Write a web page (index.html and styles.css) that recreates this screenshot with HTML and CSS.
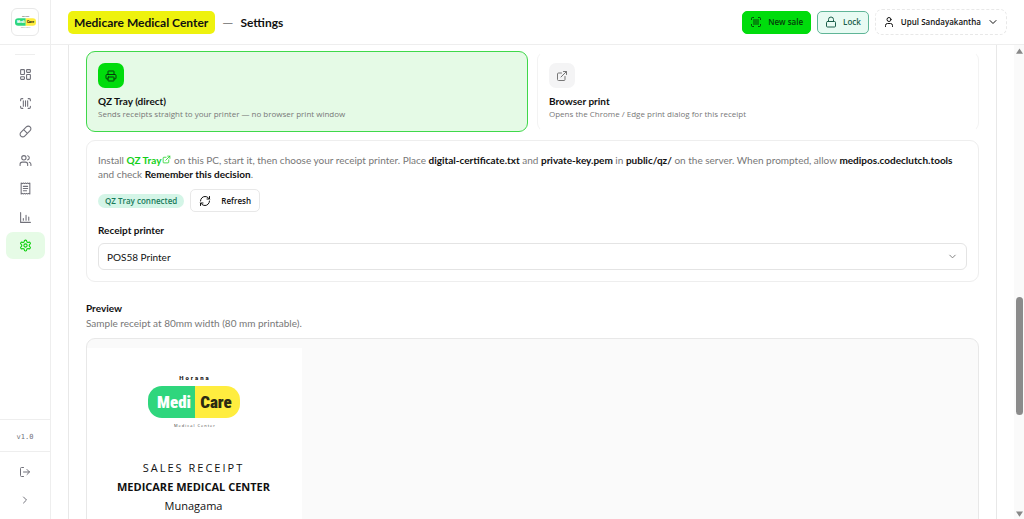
FILE: index.html
```
<!DOCTYPE html>
<html lang="en">
<head>
    <meta charset="UTF-8">
    <meta name="viewport" content="width=device-width, initial-scale=1.0">
    <title>Medicare Medical Center — Settings</title>
    <link rel="stylesheet" href="styles.css">
</head>
<body>
    <svg class="defs" aria-hidden="true">
        <symbol id="scan" viewBox="0 0 24 24"><path d="M3 7V5a2 2 0 0 1 2-2h2M17 3h2a2 2 0 0 1 2 2v2M21 17v2a2 2 0 0 1-2 2h-2M7 21H5a2 2 0 0 1-2-2v-2M8 7v10M12 7v10M16 7v10"/></symbol>
        <symbol id="external" viewBox="0 0 24 24"><path d="M15 3h6v6M10 14 21 3M18 13v6a2 2 0 0 1-2 2H5a2 2 0 0 1-2-2V8a2 2 0 0 1 2-2h6"/></symbol>
        <symbol id="down" viewBox="0 0 24 24"><path d="m6 9 6 6 6-6"/></symbol>
        <symbol id="logo" viewBox="0 0 92 56">
            <text class="logo-top" x="47" y="6" text-anchor="middle">Horana</text>
            <path fill="#2fd67d" d="M47 12H14A14 14 0 0 0 0 26v4a14 14 0 0 0 14 14h33z"/>
            <path fill="#ffed3f" d="M47 12h31a14 14 0 0 1 14 14v4a14 14 0 0 1-14 14H47z"/>
            <text class="logo-word" fill="#fff" x="26" y="34" text-anchor="middle">Medi</text>
            <text class="logo-word" fill="#2b2a12" x="68" y="34" text-anchor="middle">Care</text>
            <text class="logo-sub" x="47" y="53" text-anchor="middle">Medical Center</text>
        </symbol>
    </svg>
    <div class="app">
        <aside class="sidebar">
            <div class="brand">
                <a href="#" class="brand-box" aria-label="Home"><svg><use href="#logo"/></svg></a>
            </div>
            <hr>
            <nav>
                <a href="#" aria-label="Dashboard"><svg class="icon" viewBox="0 0 24 24"><rect x="3" y="3" width="7" height="9" rx="1"/><rect x="14" y="3" width="7" height="5" rx="1"/><rect x="14" y="12" width="7" height="9" rx="1"/><rect x="3" y="16" width="7" height="5" rx="1"/></svg></a>
                <a href="#" aria-label="Sale"><svg class="icon"><use href="#scan"/></svg></a>
                <a href="#" aria-label="Medicines"><svg class="icon" viewBox="0 0 24 24"><path d="m10.500 20.500 10-10a4.950 4.950 0 1 0-7-7l-10 10a4.950 4.950 0 1 0 7 7ZM8.500 8.500l7 7"/></svg></a>
                <a href="#" aria-label="Customers"><svg class="icon" viewBox="0 0 24 24"><path d="M16 21v-2a4 4 0 0 0-4-4H6a4 4 0 0 0-4 4v2M22 21v-2a4 4 0 0 0-3-3.870M16 3.130a4 4 0 0 1 0 7.750"/><circle cx="9" cy="7" r="4"/></svg></a>
                <a href="#" aria-label="Receipts"><svg class="icon" viewBox="0 0 24 24"><path d="M4 2v20l2-1 2 1 2-1 2 1 2-1 2 1 2-1 2 1V2l-2 1-2-1-2 1-2-1-2 1-2-1-2 1ZM8 8h8M8 12h8M8 16h6"/></svg></a>
                <a href="#" aria-label="Reports"><svg class="icon" viewBox="0 0 24 24"><path d="M3 3v18h18M8 17v-3M13 17V8M18 17v-6"/></svg></a>
                <a href="#" class="active" aria-label="Settings"><svg class="icon" viewBox="0 0 24 24"><path d="M12.220 2h-.440a2 2 0 0 0-2 2v.180a2 2 0 0 1-1 1.730l-.430.250a2 2 0 0 1-2 0l-.150-.080a2 2 0 0 0-2.730.730l-.220.380a2 2 0 0 0 .730 2.730l.150.100a2 2 0 0 1 1 1.720v.510a2 2 0 0 1-1 1.740l-.150.090a2 2 0 0 0-.730 2.730l.220.380a2 2 0 0 0 2.730.730l.150-.080a2 2 0 0 1 2 0l.430.250a2 2 0 0 1 1 1.730V20a2 2 0 0 0 2 2h.440a2 2 0 0 0 2-2v-.180a2 2 0 0 1 1-1.730l.430-.250a2 2 0 0 1 2 0l.150.080a2 2 0 0 0 2.730-.730l.220-.390a2 2 0 0 0-.730-2.730l-.150-.080a2 2 0 0 1-1-1.740v-.500a2 2 0 0 1 1-1.740l.150-.090a2 2 0 0 0 .730-2.730l-.220-.380a2 2 0 0 0-2.730-.730l-.150.080a2 2 0 0 1-2 0l-.430-.250a2 2 0 0 1-1-1.730V4a2 2 0 0 0-2-2z"/><circle cx="12" cy="12" r="3"/></svg></a>
            </nav>
            <div class="version">v1.0</div>
            <div class="side-actions">
                <button aria-label="Sign out"><svg class="icon" viewBox="0 0 24 24"><path d="M9 21H5a2 2 0 0 1-2-2V5a2 2 0 0 1 2-2h4M16 17l5-5-5-5M21 12H9"/></svg></button>
                <button aria-label="Expand"><svg class="icon" viewBox="0 0 24 24"><path d="m9 18 6-6-6-6"/></svg></button>
            </div>
        </aside>

        <div class="page">
            <header>
                <h1><mark>Medicare Medical Center</mark> <span class="dash">—</span> Settings</h1>
                <div class="tools">
                    <button class="btn sale"><svg class="icon"><use href="#scan"/></svg>New sale</button>
                    <button class="btn lock"><svg class="icon" viewBox="0 0 24 24"><rect x="3" y="11" width="18" height="11" rx="2"/><path d="M7 11V7a5 5 0 0 1 10 0v4"/></svg>Lock</button>
                    <button class="btn user"><svg class="icon" viewBox="0 0 24 24"><path d="M19 21v-2a4 4 0 0 0-4-4H9a4 4 0 0 0-4 4v2"/><circle cx="12" cy="7" r="4"/></svg>Upul Sandayakantha<svg class="icon"><use href="#down"/></svg></button>
                </div>
            </header>

            <div class="body">
                <main>
                    <section class="settings">
                        <div class="modes">
                            <button class="mode selected">
                                <span class="tile"><svg class="icon" viewBox="0 0 24 24"><path d="M6 18H4a2 2 0 0 1-2-2v-5a2 2 0 0 1 2-2h16a2 2 0 0 1 2 2v5a2 2 0 0 1-2 2h-2M6 9V3a1 1 0 0 1 1-1h10a1 1 0 0 1 1 1v6"/><rect x="6" y="14" width="12" height="8" rx="1"/></svg></span>
                                <strong>QZ Tray (direct)</strong>
                                <small>Sends receipts straight to your printer — no browser print window</small>
                            </button>
                            <button class="mode">
                                <span class="tile"><svg class="icon"><use href="#external"/></svg></span>
                                <strong>Browser print</strong>
                                <small>Opens the Chrome / Edge print dialog for this receipt</small>
                            </button>
                        </div>

                        <div class="panel">
                            <p>Install <a href="#">QZ Tray<svg class="icon"><use href="#external"/></svg></a> on this PC, start it, then choose your receipt printer. Place <b>digital-certificate.txt</b> and <b>private-key.pem</b> in <b>public/qz/</b> on the server. When prompted, allow <b>medipos.codeclutch.tools</b> and check <b>Remember this decision</b>.</p>
                            <div class="status">
                                <span class="badge">QZ Tray connected</span>
                                <button class="btn refresh"><svg class="icon" viewBox="0 0 24 24"><path d="M3 12a9 9 0 0 1 9-9 9.750 9.750 0 0 1 6.740 2.740L21 8M21 3v5h-5M21 12a9 9 0 0 1-9 9 9.750 9.750 0 0 1-6.740-2.740L3 16M8 16H3v5"/></svg>Refresh</button>
                            </div>
                            <label for="printer">Receipt printer</label>
                            <div class="select">
                                <select id="printer"><option>POS58 Printer</option></select>
                                <svg class="icon"><use href="#down"/></svg>
                            </div>
                        </div>

                        <h2>Preview</h2>
                        <p class="hint">Sample receipt at 80mm width (80 mm printable).</p>
                        <div class="preview">
                            <div class="receipt">
                                <svg class="receipt-logo"><use href="#logo"/></svg>
                                <div class="kind">SALES RECEIPT</div>
                                <div class="shop">MEDICARE MEDICAL CENTER</div>
                                <div class="town">Munagama</div>
                            </div>
                        </div>
                    </section>
                </main>
                <div class="scrollbar" aria-hidden="true">
                    <svg viewBox="0 0 8 6"><path d="M4 0 8 6H0z"/></svg>
                    <div class="thumb"></div>
                    <svg viewBox="0 0 8 6"><path d="M4 6 0 0h8z"/></svg>
                </div>
            </div>
        </div>
    </div>
</body>
</html>
```
FILE: styles.css
```
* {
    box-sizing: border-box;
}
body {
    margin: 0;
    font-family: Lato, "Open Sans", sans-serif;
    font-size: 10px;
    line-height: 14px;
    color: #111;
    background: #fff;
}
h1, h2, p {
    margin: 0;
}
button {
    font: inherit;
    color: inherit;
    background: none;
    border: 0;
    padding: 0;
}
a {
    text-decoration: none;
}
.defs {
    display: none;
}
.icon {
    width: 12px;
    height: 12px;
    flex: none;
    fill: none;
    stroke: currentColor;
    stroke-width: 2;
    stroke-linecap: round;
    stroke-linejoin: round;
}
.app {
    display: flex;
    height: 100vh;
    overflow: hidden;
}

/* sidebar */
.sidebar {
    display: flex;
    flex-direction: column;
    flex: none;
    width: 51px;
    border-right: 1px solid #eee;
    color: #71717a;
}
.brand {
    display: flex;
    align-items: center;
    justify-content: center;
    height: 45px;
    border-bottom: 1px solid #eee;
}
.brand-box {
    display: flex;
    align-items: center;
    justify-content: center;
    width: 28px;
    height: 28px;
    border: 1px solid #e8e8e8;
    border-radius: 6px;
}
.brand-box svg {
    width: 21px;
    height: 14px;
}
.sidebar hr {
    width: 20px;
    margin: 9px auto 6px;
    border: 0;
    border-top: 1px solid #eee;
}
nav {
    display: flex;
    flex-direction: column;
    justify-content: space-between;
    height: 198px;
    padding: 0 5px 0 6px;
}
nav a {
    display: flex;
    align-items: center;
    justify-content: center;
    height: 27px;
    border-radius: 7px;
    color: inherit;
}
nav .icon {
    width: 13px;
    height: 13px;
}
nav .active {
    background: #e6fbe6;
    color: #0bd00b;
}
.version {
    margin-top: auto;
    height: 33px;
    border: solid #eee;
    border-width: 1px 0;
    font: 7px/35px "DejaVu Sans Mono", monospace;
    text-align: center;
}
.side-actions {
    display: flex;
    flex-direction: column;
    padding: 6px 0 5px;
}
.side-actions button {
    height: 28px;
}
.side-actions .icon {
    display: block;
    margin: auto;
}

/* header */
.page {
    display: flex;
    flex-direction: column;
    flex: 1;
    min-width: 0;
}
header {
    display: flex;
    align-items: center;
    justify-content: space-between;
    flex: none;
    height: 45px;
    padding: 0 17px;
    border-bottom: 1px solid #eee;
}
h1 {
    display: flex;
    gap: 7px;
    font-size: 12px;
    line-height: 23px;
    font-weight: 700;
}
mark {
    padding: 0 7px 0 6px;
    border-radius: 5px;
    background: #eef20e;
    color: inherit;
}
.dash {
    color: #888;
    font-size: 14px;
    font-weight: 400;
}
.tools {
    display: flex;
    align-items: center;
    gap: 6px;
}
.btn {
    display: flex;
    align-items: center;
    height: 23px;
    padding: 0 7px;
    gap: 6px;
    border: 1px solid #e8e8e8;
    border-radius: 5px;
    font-family: "Open Sans", sans-serif;
    font-size: 8px;
    font-weight: 600;
    white-space: nowrap;
}
.sale {
    border-color: #00dc0c;
    background: #00dc0c;
    color: #053b0a;
}
.lock {
    border-color: #5fb597;
    background: #e8fbf3;
    color: #1b5e4a;
}
.user {
    height: 26px;
    border: 1px dashed #e8e8e8;
    border-radius: 7px;
}

/* settings */
.body {
    display: flex;
    flex: 1;
    min-height: 0;
}
main {
    flex: 1;
    min-width: 0;
    padding: 0 17px;
    overflow: hidden;
}
.settings {
    min-height: 100%;
    padding: 6px 17px 0;
    border: solid #e8e8e8;
    border-width: 0 1px;
}
.modes {
    display: grid;
    grid-template-columns: 1fr 1fr;
    gap: 9px;
}
.mode {
    display: flex;
    flex-direction: column;
    align-items: flex-start;
    height: 81px;
    padding: 11px;
    border: 1px solid #f3f3f3;
    border-top-color: transparent;
    border-bottom-color: transparent;
    border-radius: 9px;
    text-align: left;
}
.mode.selected {
    border-color: #3fd84a;
    background: #e5fae6;
}
.tile {
    display: flex;
    align-items: center;
    justify-content: center;
    width: 26px;
    height: 26px;
    margin-bottom: 6px;
    border-radius: 7px;
    background: #f4f4f5;
    color: #777;
}
.selected .tile {
    background: #00dc0c;
    color: #053b0a;
}
.mode strong, label, h2 {
    font-size: 10px;
    line-height: 14px;
    font-weight: 700;
}
.mode small {
    font-family: "Open Sans", sans-serif;
    font-size: 8px;
    line-height: 12px;
    color: #777;
}
.panel {
    margin-top: 8px;
    padding: 12px 11px 11px;
    border: 1px solid #eee;
    border-radius: 9px;
}
.panel p, .hint {
    color: #777;
}
.panel b {
    font-weight: 700;
    color: #111;
}
.panel p a {
    font-weight: 700;
    color: #14cf1a;
}
.panel p .icon {
    width: 9px;
    height: 9px;
    margin-left: 1px;
}
.status {
    display: flex;
    align-items: center;
    gap: 6px;
    margin: 8px 0 11px;
}
.badge {
    padding: 0 7px;
    border-radius: 7px;
    background: #d4f5e7;
    color: #187a5b;
    font-family: "Open Sans", sans-serif;
    font-size: 8px;
    font-weight: 600;
}
.refresh {
    padding: 0 8px;
    gap: 10px;
}
label {
    display: block;
}
.select {
    position: relative;
    margin-top: 6px;
}
select {
    display: block;
    width: 100%;
    height: 27px;
    padding: 0 8px;
    appearance: none;
    border: 1px solid #e4e4e4;
    border-radius: 6px;
    background: #fff;
    font: inherit;
    color: inherit;
}
.select .icon {
    position: absolute;
    top: 8px;
    right: 9px;
    width: 11px;
    height: 11px;
    color: #777;
}
h2 {
    margin: 19px 0 1px;
}
.preview {
    margin-top: 8px;
    padding-top: 9px;
    border: 1px solid #e8e8e8;
    border-radius: 9px;
    background: #fafafa;
}
.receipt {
    width: 215px;
    padding: 26px 14px 26px 12px;
    background: #fff;
    font-family: "Open Sans", sans-serif;
    font-size: 11px;
    line-height: 19px;
    text-align: center;
}
.receipt-logo {
    display: block;
    width: 92px;
    height: 56px;
    margin: 0 auto 28px;
}
.logo-top {
    font: 900 6px Roboto, sans-serif;
    letter-spacing: 2px;
    fill: #222;
}
.logo-word {
    font: 900 17px "Roboto Condensed", Roboto, sans-serif;
}
.logo-sub {
    font: 4px "Open Sans", sans-serif;
    letter-spacing: 1px;
    fill: #444;
}
.kind {
    letter-spacing: 2px;
}
.shop {
    font-weight: 700;
}

/* scroll track */
.scrollbar {
    display: flex;
    flex-direction: column;
    align-items: center;
    width: 10px;
    padding: 3px 0 2px;
    background: #fafafa;
}
.scrollbar svg {
    width: 7px;
    height: 6px;
    fill: #888;
}
.thumb {
    width: 7px;
    height: 118px;
    margin: 243px 0 auto;
    border-radius: 4px;
    background: #8b8b8b;
}
```
